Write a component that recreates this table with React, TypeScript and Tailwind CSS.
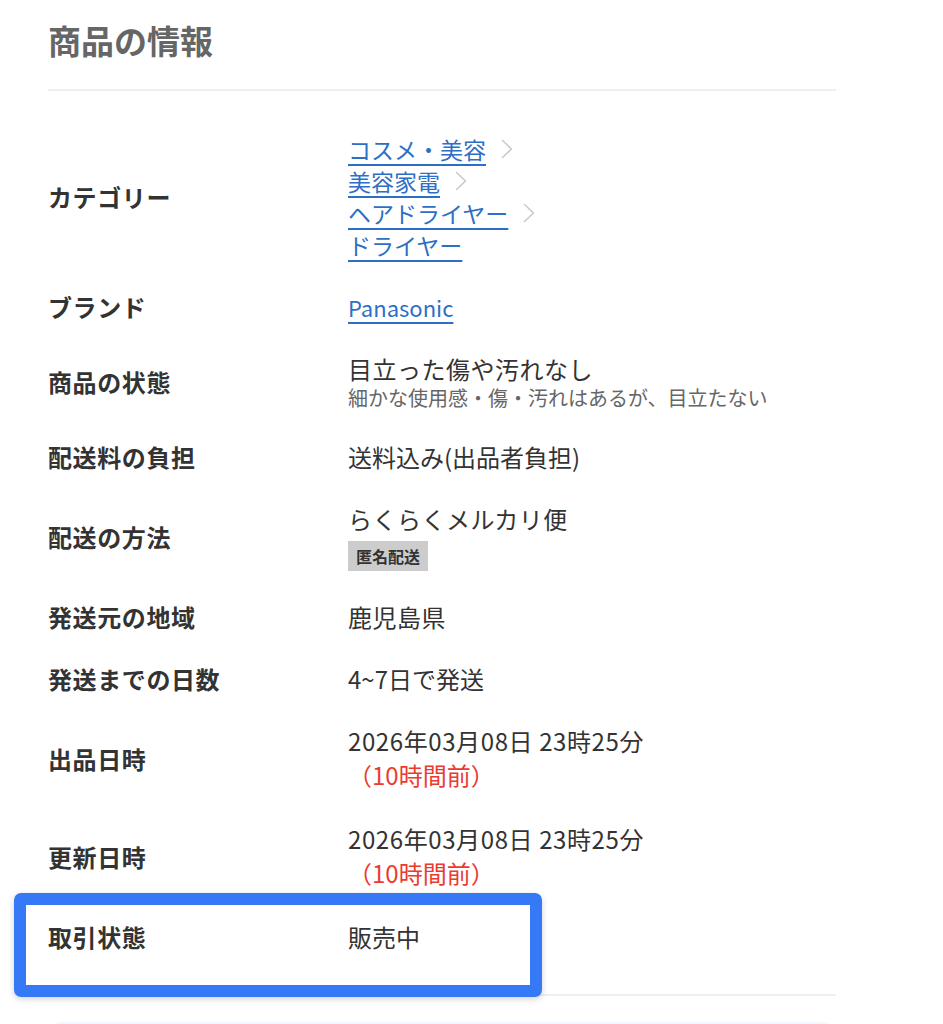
import { ReactNode } from "react";

const FONT = "[font-family:'Noto_Sans_CJK_JP','Noto_Sans',sans-serif]";

const Chevron = () => (
  <svg width="12" height="20" viewBox="0 0 12 20" fill="none" className="ml-[15px] shrink-0">
    <path d="M1.5 1.5 L10.5 10 L1.5 18.5" stroke="#cacaca" strokeWidth="1.6" strokeLinecap="round" strokeLinejoin="round" />
  </svg>
);

const categories = ["コスメ・美容", "美容家電", "ヘアドライヤー", "ドライヤー"];

const CategoryLinks = () => (
  <div className="flex flex-col">
    {categories.map((c, i) => (
      <div key={c} className="flex items-center h-[32px]">
        <a className="text-[#2d6fc6] text-[23px] underline decoration-[1.5px] underline-offset-[5px] leading-[32px]">
          {c}
        </a>
        {i < categories.length - 1 && <Chevron />}
      </div>
    ))}
  </div>
);

const Ago = () => (
  <div className="text-[#eb3a2f] text-[24px] leading-[36px]">（10時間前）</div>
);

const DateLine = () => (
  <div className="text-[24px] leading-[32px] tracking-[0.6px]">2026年03月08日 23時25分</div>
);

interface Row {
  label: string;
  value: ReactNode;
}

const rows: Row[] = [
  { label: "カテゴリー", value: <CategoryLinks /> },
  {
    label: "ブランド",
    value: (
      <a className="text-[#2d6fc6] text-[22px] underline decoration-[1.5px] underline-offset-[5px] leading-[32px]">
        Panasonic
      </a>
    ),
  },
  {
    label: "商品の状態",
    value: (
      <div>
        <div className="text-[24px] leading-[32px] tracking-[0.5px]">目立った傷や汚れなし</div>
        <div className="text-[20px] leading-[26px] text-[#666]">細かな使用感・傷・汚れはあるが、目立たない</div>
      </div>
    ),
  },
  { label: "配送料の負担", value: <div className="text-[24px] leading-[32px]">送料込み(出品者負担)</div> },
  {
    label: "配送の方法",
    value: (
      <div className="flex flex-col items-start">
        <div className="text-[24px] leading-[32px] tracking-[0.5px]">らくらくメルカリ便</div>
        <div className="mt-[6px] bg-[#cccccc] px-[8px] h-[30px] leading-[30px] text-[16px] font-bold text-[#333]">
          匿名配送
        </div>
      </div>
    ),
  },
  { label: "発送元の地域", value: <div className="text-[24px] leading-[32px] tracking-[0.5px]">鹿児島県</div> },
  { label: "発送までの日数", value: <div className="text-[24px] leading-[32px]">4~7日で発送</div> },
  {
    label: "出品日時",
    value: (
      <div>
        <DateLine />
        <Ago />
      </div>
    ),
  },
  {
    label: "更新日時",
    value: (
      <div>
        <DateLine />
        <Ago />
      </div>
    ),
  },
  { label: "取引状態", value: <div className="text-[24px] leading-[32px]">販売中</div> },
];

export default function App() {
  return (
    <div className={`relative min-h-[1024px] bg-white pl-[48px] overflow-hidden text-[#333] ${FONT}`}>
      <div className="w-[788px]">
        {/* heading */}
        <div className="pt-[16px] pb-[25px] border-b-2 border-[#efefef]">
          <h2 className="text-[33px] leading-[48px] font-bold text-[#666]">商品の情報</h2>
        </div>

        <div className="pt-[27px] pb-[26px] border-b-2 border-[#efefef]">
          {rows.map((r) => (
            <div key={r.label} className="flex items-center py-[15px]">
              <div className="w-[300px] shrink-0 text-[24px] tracking-[0.6px] font-bold leading-[32px]">{r.label}</div>
              <div className="flex-1">{r.value}</div>
            </div>
          ))}
        </div>

        <div className="mt-[26px] mx-[5px] h-[40px] rounded-t-lg bg-[#f1f7ff]" />
      </div>

      {/* highlight annotation */}
      <div className="absolute left-[14px] top-[893px] w-[528px] h-[104px] rounded-[7px] border-[12px] border-[#3579f6] shadow-[0_2px_6px_rgba(0,0,0,0.18)]" />
    </div>
  );
}
